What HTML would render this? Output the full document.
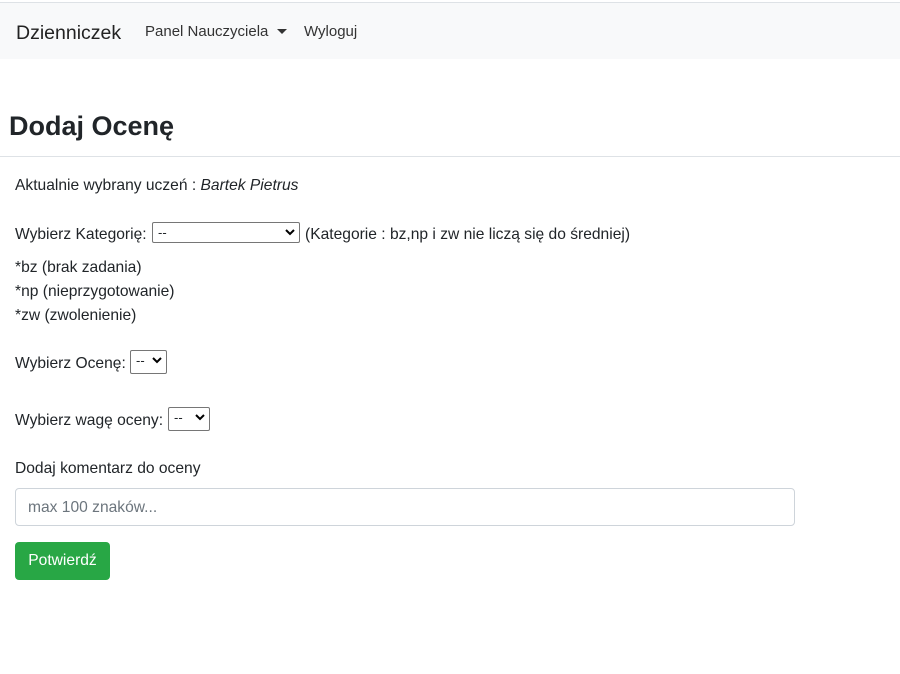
<!DOCTYPE html>
<html><head><meta charset="utf-8"><style>
body{margin:0;width:900px;height:674px;background:#fff;font-family:"Liberation Sans",sans-serif;color:#212529;font-size:15.6px;position:relative;overflow:hidden}
.a{position:absolute;white-space:nowrap;line-height:20px}
.nav{position:absolute;left:0;top:2px;width:900px;height:56px;background:#f8f9fa;border-top:1px solid #dee2e6}
.sel{display:inline-block;position:absolute;border:1px solid #767676;border-radius:2px;height:21px;box-sizing:border-box;font-size:13px;line-height:19px;padding-left:5px;background:#fff}
.sel svg{position:absolute;right:4px;top:6px}
</style></head><body>
<div class="nav"></div>
<div class="a" style="left:16px;top:22px;font-size:19.5px;line-height:22px;color:#222">Dzienniczek</div>
<div class="a" style="left:145px;top:22px;color:#333;font-size:15px">Panel Nauczyciela</div>
<div style="position:absolute;left:277px;top:29px;width:0;height:0;border-left:5px solid transparent;border-right:5px solid transparent;border-top:5px solid #333"></div>
<div class="a" style="left:304px;top:22px;color:#333;font-size:15px">Wyloguj</div>
<div class="a" style="left:9px;top:110px;font-size:27px;line-height:32px;font-weight:bold">Dodaj Ocenę</div>
<div style="position:absolute;left:0;top:156px;width:900px;height:1px;background:#dee2e6"></div>
<div class="a" style="left:15px;top:176px">Aktualnie wybrany uczeń : <i>Bartek Pietrus</i></div>
<div class="a" style="left:15px;top:225px">Wybierz Kategorię:</div>
<div class="sel" style="left:152px;top:222px;width:148px">--<svg width="10" height="7" viewBox="0 0 10 7"><path d="M1 1l4 4 4-4" fill="none" stroke="#000" stroke-width="2"/></svg></div>
<div class="a" style="left:305px;top:225px">(Kategorie : bz,np i zw nie liczą się do średniej)</div>
<div class="a" style="left:15px;top:256px;line-height:24px">*bz (brak zadania)<br>*np (nieprzygotowanie)<br>*zw (zwolenienie)</div>
<div class="a" style="left:15px;top:354px">Wybierz Ocenę:</div>
<div class="sel" style="left:130px;top:350px;width:37px;height:24px">--<svg width="10" height="7" viewBox="0 0 10 7"><path d="M1 1l4 4 4-4" fill="none" stroke="#000" stroke-width="2"/></svg></div>
<div class="a" style="left:15px;top:411px">Wybierz wagę oceny:</div>
<div class="sel" style="left:168px;top:407px;width:42px;height:24px">--<svg width="10" height="7" viewBox="0 0 10 7"><path d="M1 1l4 4 4-4" fill="none" stroke="#000" stroke-width="2"/></svg></div>
<div class="a" style="left:15px;top:459px">Dodaj komentarz do oceny</div>
<div style="position:absolute;left:15px;top:488px;width:780px;height:38px;box-sizing:border-box;border:1px solid #ced4da;border-radius:4px"></div>
<div class="a" style="left:28px;top:498px;color:#6c757d">max 100 znaków...</div>
<div style="position:absolute;left:15px;top:542px;width:95px;height:38px;background:#28a745;border-radius:4px;color:#fff;line-height:38px;text-align:center">Potwierdź</div>
</body></html>
